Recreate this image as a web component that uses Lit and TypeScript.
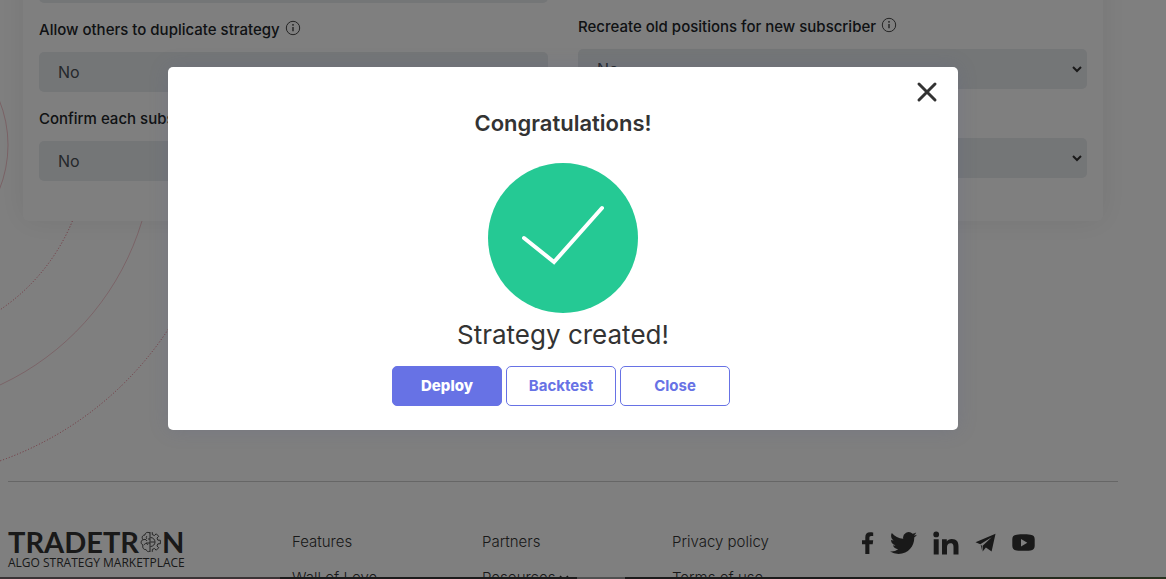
import { LitElement, html, css } from "lit";
import { customElement, property } from "lit/decorators.js";

const infoIcon = html`<svg class="info" viewBox="0 0 16 16" width="16" height="16" aria-hidden="true">
  <circle cx="8" cy="8" r="6.7" fill="none" stroke="#333" stroke-width="0.9" />
  <path d="M8 7v4.3" stroke="#222" stroke-width="1.2" />
  <circle cx="8" cy="4.9" r="0.8" fill="#222" />
</svg>`;

@customElement("form-field")
export class FormField extends LitElement {
  @property() label = "";
  @property() value = "No";
  @property({ type: Boolean }) info = false;

  static styles = css`
    :host {
      display: block;
    }
    .label {
      display: flex;
      align-items: center;
      gap: 5px;
      height: 20px;
      padding: 17px 0 12px;
      font-size: 15px;
      line-height: 20px;
      font-weight: 500;
      color: #212529;
      white-space: nowrap;
    }
    .info {
      margin-bottom: 4px;
    }
    .box {
      position: relative;
    }
    .select {
      display: block;
      width: 100%;
      height: 40px;
      padding: 0 19px;
      border: 0;
      border-radius: 5px;
      background: #e9ecef;
      color: #495057;
      font: 400 16px/24px Inter, sans-serif;
      appearance: none;
    }
    .arrow {
      position: absolute;
      right: 5px;
      top: 15px;
      pointer-events: none;
    }
  `;

  render() {
    return html`
      <label class="label" for="control">${this.label}${this.info ? infoIcon : ""}</label>
      <div class="box">
        <select class="select" id="control">
          <option>${this.value}</option>
          <option>Yes</option>
        </select>
        <svg class="arrow" width="10" height="10" viewBox="0 0 10 10" aria-hidden="true">
          <path d="M1 3l4 4 4-4" fill="none" stroke="#333" stroke-width="2" />
        </svg>
      </div>
    `;
  }
}

// Outline of the right half of a cog: pairs of [angle in degrees, radius].
const cogOutline = (() => {
  const points: [number, number][] = [];
  for (let centre = -90; centre <= 90; centre += 45) {
    points.push([centre - 14, 7.6], [centre - 10, 10], [centre + 10, 10], [centre + 14, 7.6]);
  }
  return points
    .filter(([angle]) => angle >= -90 && angle <= 90)
    .map(([angle, radius], i) => {
      const rad = (angle * Math.PI) / 180;
      const x = 10.5 + radius * Math.cos(rad);
      const y = 11 + radius * Math.sin(rad);
      return `${i ? "L" : "M"}${x.toFixed(2)} ${y.toFixed(2)}`;
    })
    .join("");
})();

@customElement("brand-logo")
export class BrandLogo extends LitElement {
  static styles = css`
    :host {
      display: block;
      color: #333;
    }
    .name {
      display: flex;
      align-items: center;
      gap: 1px;
      height: 24px;
      font: 700 29px/24px Lato, sans-serif;
    }
    .tagline {
      font: 400 12px/18px "Open Sans", sans-serif;
      white-space: nowrap;
    }
  `;

  render() {
    return html`
      <div class="name">
        <span>TRADETR</span>
        <svg width="21" height="22" viewBox="0 0 21 22" fill="none" stroke="#333" stroke-width="0.9" aria-hidden="true">
          <path d="M10 2C7 0.500 5 2 5 4C2 4 1.500 7 3 8.500C0.500 10 0.500 13 3 14C2 17 4 19 6 18.500C7 21 9 21 10 20" />
          <path d="M10 1v20M7 5c-1 1-1 2 0 3M3 9c1-1 3-1 4 1M4 14c1-2 3-2 4 0M10 8H8M10 12H6" />
          <path d="M10.500 6.500a4.500 4.500 0 0 1 0 9M10.500 11h4" />
          <path d=${cogOutline} />
        </svg>
        <span>N</span>
      </div>
      <div class="tagline">ALGO STRATEGY MARKETPLACE</div>
    `;
  }
}

const socials = [
  {
    name: "Facebook",
    width: 12,
    box: "0 0 12 24",
    path: "M3.300 23V13.200H0V9.200h3.300V6.300C3.300 3 5 1.300 8 1.300c1.400 0 2.600.1 3.200.2v3.600H9.300c-1.500 0-1.900.8-1.900 1.900v2.200h3.800l-.5 4H7.400V23z",
  },
  {
    name: "Twitter",
    width: 27,
    box: "0 1.500 24 21",
    path: "M23.950 4.570a10 10 0 0 1-2.820.770 4.960 4.960 0 0 0 2.160-2.720c-.95.550-2 .95-3.130 1.180a4.920 4.920 0 0 0-8.380 4.480C7.690 8.090 4.070 6.130 1.640 3.160a4.900 4.900 0 0 0-.67 2.480c0 1.700.87 3.210 2.190 4.100a4.900 4.900 0 0 1-2.230-.620v.060a4.920 4.920 0 0 0 3.950 4.830 4.900 4.900 0 0 1-2.210.080 4.930 4.930 0 0 0 4.600 3.420A9.870 9.870 0 0 1 0 19.540a13.990 13.990 0 0 0 7.550 2.210c9.050 0 14-7.500 14-13.980 0-.210 0-.420-.020-.630a9.940 9.940 0 0 0 2.460-2.550z",
  },
  {
    name: "LinkedIn",
    width: 26,
    box: "0 0 26 24",
    path: "M.7 8.300h5V23.600h-5zM3.200.500a2.900 2.900 0 1 1 0 5.800 2.900 2.900 0 0 1 0-5.800zM9 8.300h4.800v2.100c.8-1.400 2.500-2.500 5-2.500 5 0 6.700 2.900 6.700 7.500v8.200h-5v-7.400c0-2-.4-4-2.900-4-2.600 0-3.600 1.700-3.600 4.200v7.200H9z",
  },
  {
    name: "Telegram",
    width: 21,
    box: "0 0 22 24",
    path: "M21.500 2.300L.500 11.200l5 2.200L17.500 6 8 14.800v6l3.400-4.200 6 4.200zM6 14.200l1.200 5.500v-5z",
  },
  {
    name: "YouTube",
    width: 23,
    box: "0 0 23 24",
    path: "M4.500 3.800C10 3.200 13 3.200 18.500 3.800c3 .3 4 1.500 4.200 4.300v7c-.2 2.800-1.200 4-4.200 4.300-5.500.5-8.500.5-14 0-3-.3-4-1.500-4.200-4.300v-7c.2-2.800 1.200-4 4.200-4.300zM9 8v7.400l6.300-3.700z",
  },
];

@customElement("site-footer")
export class SiteFooter extends LitElement {
  static styles = css`
    :host {
      display: grid;
      grid-template-columns: 284fr 190fr 190fr 190fr 256fr;
      border-top: 1px solid #ccc;
      padding-top: 42px;
    }
    .logo {
      padding-top: 6px;
    }
    .column {
      display: flex;
      flex-direction: column;
      font-size: 15px;
      line-height: 36px;
    }
    .link {
      color: #333;
      text-decoration: none;
      font-weight: 300;
    }
    .chevron {
      margin-left: 3px;
    }
    .socials {
      display: flex;
      align-items: center;
      gap: 16px;
      height: 38px;
    }
    .icon {
      display: block;
      fill: #333;
    }
  `;

  render() {
    const columns = [
      ["Features", "Wall of Love"],
      ["Partners", "Resources"],
      ["Privacy policy", "Terms of use"],
    ];
    const chevron = html`<svg class="chevron" width="12" height="8" viewBox="0 0 12 8" aria-hidden="true">
      <path d="M2 1l4 4 4-4" fill="none" stroke="#333" stroke-width="1.5" />
    </svg>`;
    return html`
      <brand-logo class="logo"></brand-logo>
      ${columns.map(
        (links) => html`<nav class="column">
          ${links.map(
            (text) => html`<a class="link" href="#">${text}${text === "Resources" ? chevron : ""}</a>`
          )}
        </nav>`
      )}
      <div class="socials">
        ${socials.map(
          (s) => html`<a href="#" aria-label=${s.name}>
            <svg class="icon" width=${s.width} height="24" viewBox=${s.box}>
              <path fill-rule="evenodd" d=${s.path} />
            </svg>
          </a>`
        )}
      </div>
    `;
  }
}

@customElement("success-dialog")
export class SuccessDialog extends LitElement {
  static styles = css`
    :host {
      display: block;
      box-sizing: border-box;
      width: 90%;
      max-width: 790px;
      background: #fff;
      border-radius: 5px;
      color: #333;
      box-shadow: 0 0 20px rgba(82, 92, 140, 0.2);
    }
    .top {
      display: flex;
      justify-content: flex-end;
      padding: 13px 19px 0;
    }
    .dismiss {
      display: block;
      width: 24px;
      height: 24px;
      padding: 0;
      border: 0;
      background: none;
    }
    .body {
      display: flex;
      flex-direction: column;
      align-items: center;
      padding: 4px 20px 24px;
    }
    .title {
      margin: 0 0 25px;
      font-size: 22px;
      line-height: 30px;
      font-weight: 600;
    }
    .message {
      margin: 4px 0 13px;
      font-size: 26px;
      line-height: 36px;
      font-weight: 400;
    }
    .actions {
      display: flex;
      gap: 4px;
      padding-right: 4px;
    }
    .button {
      width: 110px;
      height: 40px;
      padding: 0;
      border: 1px solid #6772e5;
      border-radius: 5px;
      background: #fff;
      color: #6772e5;
      font: 700 15px/20px Inter, sans-serif;
    }
    .primary {
      background: #6772e5;
      color: #fff;
      font-weight: 800;
    }
    .tick {
      display: block;
    }
  `;

  render() {
    return html`
      <div class="top">
        <button class="dismiss" aria-label="Dismiss">
          <svg width="24" height="24" viewBox="0 0 24 24">
            <path d="M4 4l16 16M20 4L4 20" stroke="#333" stroke-width="3" stroke-linecap="round" />
          </svg>
        </button>
      </div>
      <div class="body">
        <h2 class="title">Congratulations!</h2>
        <svg class="tick" width="150" height="150" viewBox="0 0 150 150" aria-hidden="true">
          <circle cx="75" cy="75" r="75" fill="#25c994" />
          <path d="M36 75l30 24L114 45" fill="none" stroke="#fff" stroke-width="4" stroke-linecap="round" />
        </svg>
        <p class="message">Strategy created!</p>
        <div class="actions">
          <button class="button primary">Deploy</button>
          <button class="button">Backtest</button>
          <button class="button">Close</button>
        </div>
      </div>
    `;
  }
}

@customElement("app-root")
export class AppRoot extends LitElement {
  static styles = css`
    :host {
      display: block;
      position: relative;
      height: 100vh;
      overflow: hidden;
      background: #fff;
      font-family: Inter, sans-serif;
    }
    .rings {
      position: absolute;
      left: 0;
      top: 0;
    }
    .page {
      position: relative;
      padding: 0 48px 0 8px;
    }
    .card {
      display: grid;
      grid-template-columns: 1fr 1fr;
      gap: 30px;
      margin: -86px 15px 260px;
      padding: 0 16px 40px;
      border-radius: 6px;
      background: #fff;
      box-shadow: 0 0 30px rgba(0, 0, 0, 0.08);
    }
    .right {
      margin-top: -3px;
    }
    .overlay {
      position: absolute;
      inset: 0;
      display: flex;
      align-items: flex-start;
      justify-content: center;
      padding: 67px 40px 0 0;
      background: rgba(0, 0, 0, 0.5);
    }
    .edge {
      position: absolute;
      left: 0;
      right: 0;
      bottom: 0;
      height: 2px;
      background: linear-gradient(90deg, #3a3335 24%, #1b1b1b 24% 49.500%, #505050 49.500% 53.600%, #1b1b1b 53.600% 72%, #2a3320);
    }
  `;

  render() {
    return html`
      <svg class="rings" width="240" height="490" fill="none" stroke="#e0556a" aria-hidden="true">
        <circle cx="-111.500" cy="145" r="119.500" stroke-opacity="0.35" />
        <circle cx="-111.500" cy="145" r="199" stroke-opacity="0.9" stroke-dasharray="1 2" />
        <circle cx="-111.500" cy="145" r="264.600" stroke-opacity="0.32" />
        <circle cx="-111.500" cy="145" r="335" stroke-opacity="0.9" stroke-dasharray="1 2" />
      </svg>
      <main class="page">
        <section class="card">
          <div>
            <form-field label="Visibility"></form-field>
            <form-field label="Allow others to duplicate strategy" info></form-field>
            <form-field label="Confirm each subscriber"></form-field>
          </div>
          <div class="right">
            <form-field label="Category"></form-field>
            <form-field label="Recreate old positions for new subscriber" info></form-field>
            <form-field label="Position sizing"></form-field>
          </div>
        </section>
        <site-footer></site-footer>
      </main>
      <div class="overlay" role="dialog" aria-modal="true">
        <success-dialog></success-dialog>
      </div>
      <div class="edge"></div>
    `;
  }
}
